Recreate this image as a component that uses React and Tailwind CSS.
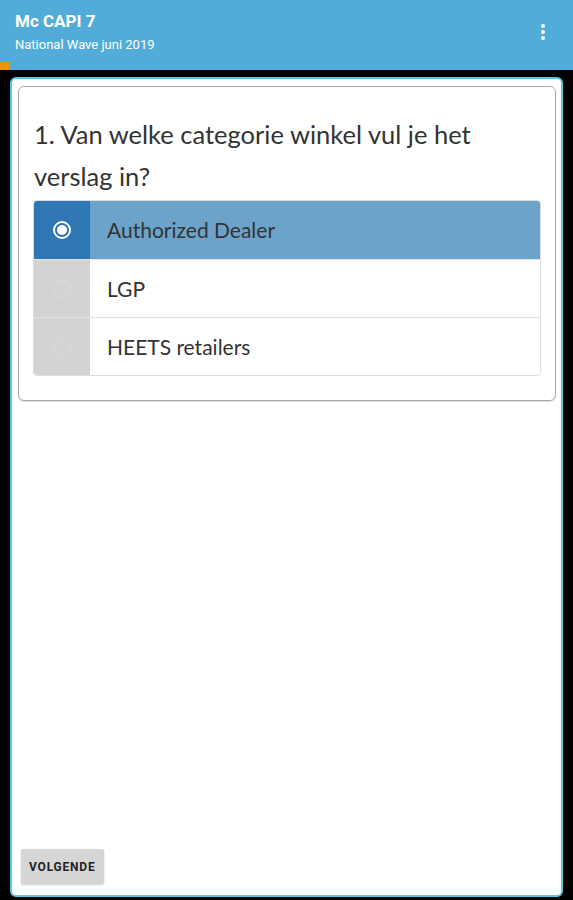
import React, { useState } from 'react';

const options = ['Authorized Dealer', 'LGP', 'HEETS retailers'];

function Radio({ checked }) {
  if (checked) {
    return (
      <span className="flex h-[18px] w-[18px] items-center justify-center rounded-full border-2 border-white">
        <span className="h-[10px] w-[10px] rounded-full bg-white" />
      </span>
    );
  }
  return <span className="h-[18px] w-[18px] rounded-full border border-[#dcdcdc]" />;
}

export default function App() {
  const [selected, setSelected] = useState(0);

  return (
    <div className="flex h-[900px] w-[573px] flex-col bg-black" style={{ fontFamily: '"Open Sans", sans-serif' }}>
      {/* Toolbar */}
      <div className="relative flex h-[70px] shrink-0 items-start justify-between bg-[#52acd9] pl-[15px] pr-[28px] pt-[10px]">
        <div className="flex flex-col" style={{ fontFamily: 'Roboto, sans-serif' }}>
          <span className="text-[17px] font-bold leading-[22px] text-white">Mc CAPI 7</span>
          <span className="mt-[4px] text-[13px] leading-[18px] text-white">National Wave juni 2019</span>
        </div>
        <div className="mt-[14px] flex flex-col gap-[2px]">
          <span className="h-[4px] w-[4px] rounded-full bg-white" />
          <span className="h-[4px] w-[4px] rounded-full bg-white" />
          <span className="h-[4px] w-[4px] rounded-full bg-white" />
        </div>
        <span className="absolute bottom-0 left-0 h-[8px] w-[10px] bg-[#f39200]" />
      </div>

      {/* Page */}
      <div className="flex flex-1 px-[10px] pb-[3px] pt-[7px]">
        <div className="flex flex-1 flex-col justify-between rounded-[6px] border-2 border-[#5cc4e4] bg-white pb-[11px] pl-[6px] pr-[5px] pt-[7px]">
          <div className="rounded-[6px] border border-[#a9a9a9] px-[14px] pb-[24px] pt-[26px] shadow-[0_1px_1px_rgba(0,0,0,0.15)]">
            <p className="pl-[1px] text-[25.5px] leading-[42px] text-[#333]" style={{ fontFamily: 'Lato, sans-serif' }}>
              1. Van welke categorie winkel vul je het verslag in?
            </p>
            <div className="mt-[3px] overflow-hidden rounded-[4px] border border-[#dddddd]">
              {options.map((o, i) => {
                const on = selected === i;
                return (
                  <button
                    key={o}
                    onClick={() => setSelected(i)}
                    className={`flex h-[58px] w-full items-stretch text-left ${i > 0 ? 'border-t border-[#e2e2e2]' : ''}`}
                  >
                    <span className={`flex w-[56px] shrink-0 items-center justify-center ${on ? 'bg-[#2e77b4]' : 'bg-[#d3d3d3]'}`}>
                      <Radio checked={on} />
                    </span>
                    <span
                      className={`flex flex-1 items-center pl-[17px] text-[21px] text-[#333] ${on ? 'bg-[#6ca3cb]' : 'bg-white'}`}
                      style={{ fontFamily: 'Lato, sans-serif' }}
                    >
                      {o}
                    </span>
                  </button>
                );
              })}
            </div>
          </div>

          <div>
            <button
              className="ml-[3px] h-[35px] rounded-[2px] bg-[#d6d6d6] px-[8px] text-[12px] font-bold tracking-[0.8px] text-[#222] shadow-[0_1px_2px_rgba(0,0,0,0.2)]"
              style={{ fontFamily: 'Roboto, sans-serif' }}
            >
              VOLGENDE
            </button>
          </div>
        </div>
      </div>
    </div>
  );
}
